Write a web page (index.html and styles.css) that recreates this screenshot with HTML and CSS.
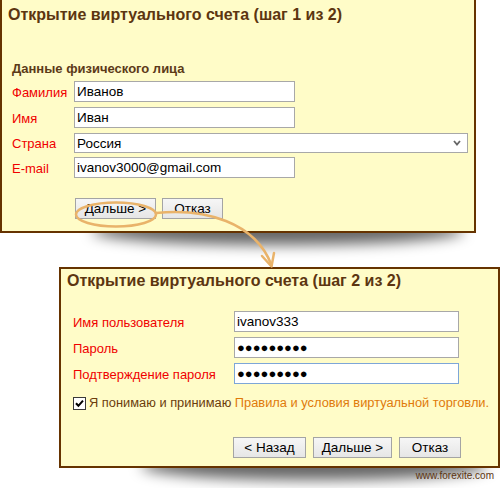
FILE: index.html
```html
<!DOCTYPE html>
<html lang="ru">
<head>
<meta charset="utf-8">
<title>Открытие виртуального счета</title>
<link rel="stylesheet" href="styles.css">
</head>
<body>
<div class="page">
  <section class="panel panel-step1">
    <h1 class="title">Открытие виртуального счета (шаг 1 из 2)</h1>
    <h2 class="subtitle">Данные физического лица</h2>
    <div class="form form-step1">
      <div class="row"><label class="label label-step1">Фамилия</label><input class="field field-short" type="text" value="Иванов"></div>
      <div class="row"><label class="label label-step1">Имя</label><input class="field field-short" type="text" value="Иван"></div>
      <div class="row row-select"><label class="label label-step1">Страна</label>
        <div class="select-wrap">
          <select class="select"><option>Россия</option></select>
          <svg class="chevron" width="8" height="6" viewBox="0 0 8 6"><path d="M1 1 L4 4.5 L7 1" fill="none" stroke="#666" stroke-width="1.8"/></svg>
        </div>
      </div>
      <div class="row"><label class="label label-step1">E-mail</label><input class="field field-short" type="text" value="ivanov3000@gmail.com"></div>
    </div>
    <div class="buttons buttons-step1">
      <button class="btn btn-next1">Дальше &gt;</button>
      <button class="btn btn-cancel1">Отказ</button>
    </div>
  </section>

  <section class="panel panel-step2">
    <h1 class="title">Открытие виртуального счета (шаг 2 из 2)</h1>
    <div class="form form-step2">
      <div class="row"><label class="label label-step2">Имя пользователя</label><input class="field field-long" type="text" value="ivanov333"></div>
      <div class="row"><label class="label label-step2">Пароль</label><input class="field field-long field-dots" type="text" value="●●●●●●●●●"></div>
      <div class="row row-last"><label class="label label-step2">Подтверждение пароля</label><input class="field field-long field-dots field-focus" type="text" value="●●●●●●●●●"></div>
    </div>
    <div class="agree">
      <span class="checkbox"><svg width="11" height="11" viewBox="0 0 11 11"><path d="M2 5.2 L4.4 7.8 L9 2.6" fill="none" stroke="#000" stroke-width="2"/></svg></span>
      <span class="agree-text">Я понимаю и принимаю <a class="agree-link">Правила и условия виртуальной торговли.</a></span>
    </div>
    <div class="buttons buttons-step2">
      <button class="btn btn-back">&lt; Назад</button>
      <button class="btn btn-next2">Дальше &gt;</button>
      <button class="btn btn-cancel2">Отказ</button>
    </div>
  </section>

  <div class="credit">www.forexite.com</div>

  <svg class="callout" width="500" height="488" viewBox="0 0 500 488">
    <ellipse cx="116" cy="214.5" rx="40" ry="12" fill="none" stroke="#e9b36a" stroke-width="2.5"/>
    <path d="M156 213 C 205 208 255 222 271.5 265" fill="none" stroke="#e9b36a" stroke-width="2.5" stroke-linecap="round"/>
    <path d="M262 256 L271.5 266.5 L274 253" fill="none" stroke="#e9b36a" stroke-width="2.5" stroke-linecap="round" stroke-linejoin="round"/>
  </svg>
</div>
</body>
</html>
```
FILE: styles.css
```css
html {
  background: #ffffff;
}

body {
  margin: 0;
  padding: 0;
  font-family: "Liberation Sans", Arial, sans-serif;
  font-size: 13px;
  color: #000;
}

.page {
  position: relative;
  width: 500px;
  height: 488px;
  overflow: hidden;
}

.panel {
  position: relative;
  box-sizing: border-box;
  background: #fffcc8;
  border: 2px solid #663300;
}

.panel::after {
  content: "";
  position: absolute;
  top: calc(100% - 14px);
  height: 28px;
  border-radius: 50%;
  background: rgba(0, 0, 0, 0.6);
  filter: blur(7px);
  z-index: -1;
}

.panel-step1 {
  width: 476px;
  height: 233px;
  border-top: 0;
  padding-top: 5px;
}

.panel-step1::after {
  left: 90px;
  right: 10px;
}

.panel-step2 {
  width: 441px;
  height: 201px;
  margin: 34px 0 0 59px;
  padding-top: 2px;
}

.panel-step2::after {
  left: 80px;
  right: 10px;
}

.title {
  margin: 0 0 0 6px;
  font-size: 16px;
  line-height: 20px;
  font-weight: bold;
  color: #5c3510;
}

.subtitle {
  margin: 36px 0 0 10px;
  font-size: 13px;
  line-height: 16px;
  font-weight: bold;
  color: #5c3a18;
}

.form-step1 {
  margin: 4px 0 0 10px;
}

.form-step2 {
  margin: 20px 0 0 12px;
}

.row {
  display: flex;
  align-items: center;
  height: 21px;
  margin-bottom: 5px;
}

.row-select {
  height: 20px;
  margin-bottom: 4px;
}

.row-last {
  margin-bottom: 0;
}

.label {
  color: #f00000;
  font-size: 13px;
  line-height: 21px;
  padding-top: 1px;
}

.label-step1 {
  width: 62px;
}

.label-step2 {
  width: 161px;
}

.field {
  box-sizing: border-box;
  height: 21px;
  margin: 0;
  padding: 0 2px;
  border: 1px solid #a8a8a8;
  background: #fff;
  font-family: "Liberation Sans", Arial, sans-serif;
  font-size: 13.5px;
  color: #000;
  outline: none;
}

.field-short {
  width: 221px;
}

.field-long {
  width: 225px;
}

.field-dots {
  font-size: 13px;
}

.field-focus {
  border-color: #7da6d8;
}

.select-wrap {
  position: relative;
  width: 394px;
  height: 20px;
}

.select {
  -webkit-appearance: none;
  appearance: none;
  box-sizing: border-box;
  width: 394px;
  height: 20px;
  margin: 0;
  padding: 0 2px;
  border: 1px solid #a8a8a8;
  border-radius: 0;
  background: #fff;
  font-family: "Liberation Sans", Arial, sans-serif;
  font-size: 13.5px;
  color: #000;
  outline: none;
}

.chevron {
  position: absolute;
  right: 7px;
  top: 7px;
  pointer-events: none;
}

.buttons {
  display: flex;
}

.buttons-step1 {
  margin: 20px 0 0 73px;
  gap: 6px;
}

.buttons-step2 {
  margin-top: 26px;
  padding-right: 37px;
  justify-content: flex-end;
  gap: 7px;
}

.btn {
  box-sizing: border-box;
  height: 21px;
  margin: 0;
  padding: 0;
  border: 1px solid #a4a4a4;
  border-radius: 0;
  background: linear-gradient(#f6f6f6, #e6e6e6);
  font-family: "Liberation Sans", Arial, sans-serif;
  font-size: 13.5px;
  color: #000;
}

.btn-next1 { width: 81px; }
.btn-cancel1 { width: 61px; }
.btn-back { width: 73px; }
.btn-next2 { width: 79px; }
.btn-cancel2 { width: 62px; }

.agree {
  display: flex;
  align-items: flex-start;
  margin: 11px 0 0 12px;
  line-height: 16px;
  font-size: 12.85px;
}

.checkbox {
  box-sizing: border-box;
  width: 13px;
  height: 13px;
  margin-top: 2px;
  margin-right: 3px;
  border: 1px solid #3a3a3a;
  background: #fff;
  display: flex;
  align-items: center;
  justify-content: center;
}

.checkbox svg {
  display: block;
}

.agree-text {
  color: #6b3c0c;
}

.agree-link {
  color: #e07a0a;
  text-decoration: none;
}

.credit {
  margin-top: 2px;
  padding-right: 6px;
  text-align: right;
  font-size: 10px;
  line-height: 12px;
  color: #5c3510;
}

.callout {
  position: absolute;
  left: 0;
  top: 0;
  pointer-events: none;
}
```
